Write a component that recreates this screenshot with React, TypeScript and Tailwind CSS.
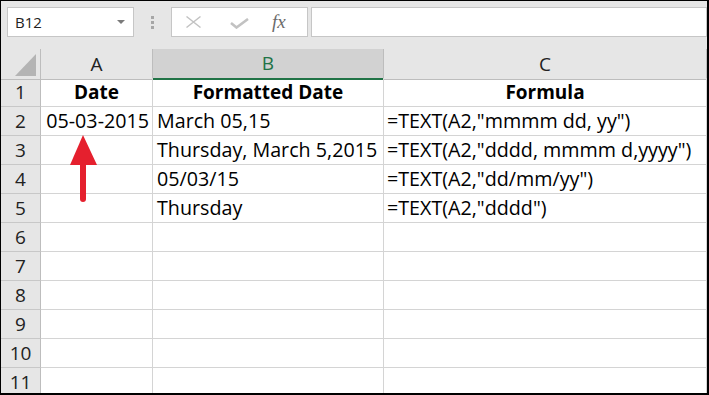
const font = { fontFamily: '"Open Sans", "Noto Sans", sans-serif' };

type Row = { n: number; a?: string; b?: string; c?: string; head?: boolean };

const rows: Row[] = [
  { n: 1, a: "Date", b: "Formatted Date", c: "Formula", head: true },
  { n: 2, a: "05-03-2015", b: "March 05,15", c: '=TEXT(A2,"mmmm dd, yy")' },
  { n: 3, b: "Thursday, March 5,2015", c: '=TEXT(A2,"dddd, mmmm d,yyyy")' },
  { n: 4, b: "05/03/15", c: '=TEXT(A2,"dd/mm/yy")' },
  { n: 5, b: "Thursday", c: '=TEXT(A2,"dddd")' },
  { n: 6 },
  { n: 7 },
  { n: 8 },
  { n: 9 },
  { n: 10 },
  { n: 11 },
];

function Toolbar() {
  return (
    <div className="flex h-[48px] items-start bg-[#e6e6e6] pl-[6px] pt-[6px]">
      {/* Name box */}
      <div className="flex h-[30px] w-[127px] items-center justify-between border border-[#c6c6c6] bg-white pl-[7px] pr-[8px]">
        <span className="text-[15px] text-[#222]">B12</span>
        <svg width="8" height="4" viewBox="0 0 8 4">
          <path d="M0 0 L8 0 L4 4 Z" fill="#7a7a7a" />
        </svg>
      </div>

      {/* Separator dots */}
      <div className="flex h-[30px] w-[37px] flex-col items-center justify-center gap-[2px]">
        <div className="h-[3px] w-[3px] bg-[#a6a6a6]" />
        <div className="h-[3px] w-[3px] bg-[#a6a6a6]" />
        <div className="h-[3px] w-[3px] bg-[#a6a6a6]" />
      </div>

      {/* Cancel / Enter / fx */}
      <div className="flex h-[30px] w-[137px] items-center border border-[#c6c6c6] bg-white pl-[13px]">
        <svg width="17" height="12" viewBox="0 0 17 12">
          <path d="M1.5 0.5 L15.5 11.5 M15.5 0.5 L1.5 11.5" stroke="#c2c2c2" strokeWidth="1.4" />
        </svg>
        <svg width="19" height="11" viewBox="0 0 19 11" className="ml-[28px] mt-[2px]">
          <path d="M1 5 L6.5 9.5 L18 1" stroke="#c2c2c2" strokeWidth="2.6" fill="none" />
        </svg>
        <span
          className="ml-[23px] text-[19px] italic text-[#6b6b6b]"
          style={{ fontFamily: '"Liberation Serif", serif' }}
        >
          fx
        </span>
      </div>

      {/* Formula input */}
      <div className="ml-[3px] h-[30px] flex-1 border border-[#c6c6c6] bg-white" />
    </div>
  );
}

function ColumnHeader() {
  return (
    <div className="grid h-[29px] grid-cols-[40px_112px_231px_323px] text-[19px]">
      <div className="relative border-r border-b border-[#bdbdbd] bg-[#e6e6e6]">
        <svg width="22" height="22" viewBox="0 0 22 22" className="absolute bottom-[3px] right-[3px]">
          <path d="M21 0 L21 22 L0 22 Z" fill="#b4b4b4" />
        </svg>
      </div>
      <div className="flex items-center justify-center border-r border-b border-[#bdbdbd] bg-[#e6e6e6] text-[#222]">
        A
      </div>
      <div className="flex items-center justify-center border-r border-b-2 border-r-[#bdbdbd] border-b-[#217346] bg-[#d2d2d2] text-[#217346]">
        B
      </div>
      <div className="flex items-center justify-center border-r border-b border-[#bdbdbd] bg-[#e6e6e6] text-[#222]">
        C
      </div>
    </div>
  );
}

function GridRow({ row }: { row: Row }) {
  const weight = row.head ? "font-bold text-[19px]" : "text-[19.7px]";
  return (
    <div className="grid h-[29px] grid-cols-[40px_112px_231px_323px] leading-[28px]">
      <div className="flex items-center justify-center border-r border-b border-r-[#bdbdbd] border-b-[#c8c8c8] bg-[#e6e6e6] text-[19px] text-[#222]">
        {row.n}
      </div>
      <div
        className={`flex items-center overflow-visible whitespace-nowrap border-r border-b border-[#d4d4d4] text-black ${
          row.head ? "justify-center" : "justify-end pr-[3px]"
        } ${weight}`}
      >
        {row.a}
      </div>
      <div
        className={`flex items-center whitespace-nowrap border-r border-b border-[#d4d4d4] text-black ${
          row.head ? "justify-center" : "pl-[4px]"
        } ${weight}`}
      >
        {row.b}
      </div>
      <div
        className={`flex items-center whitespace-nowrap border-r border-b border-[#d4d4d4] text-black ${
          row.head ? "justify-center" : "pl-[3px]"
        } ${weight}`}
      >
        {row.c}
      </div>
    </div>
  );
}

export default function App() {
  return (
    <div
      className="relative h-[395px] w-[709px] overflow-hidden border-t border-l border-r-2 border-b-2 border-black bg-white"
      style={font}
    >
      <Toolbar />
      <ColumnHeader />
      {rows.map((r) => (
        <GridRow key={r.n} row={r} />
      ))}

      {/* Red arrow pointing at A2 */}
      <svg
        width="30"
        height="72"
        viewBox="0 0 30 72"
        className="pointer-events-none absolute left-[67px] top-[132px]"
      >
        <path d="M15 2 L2 32 L29 32 Z" fill="#e5202e" />
        <path d="M15 30 L15 66" stroke="#e5202e" strokeWidth="6" strokeLinecap="round" />
      </svg>
    </div>
  );
}
